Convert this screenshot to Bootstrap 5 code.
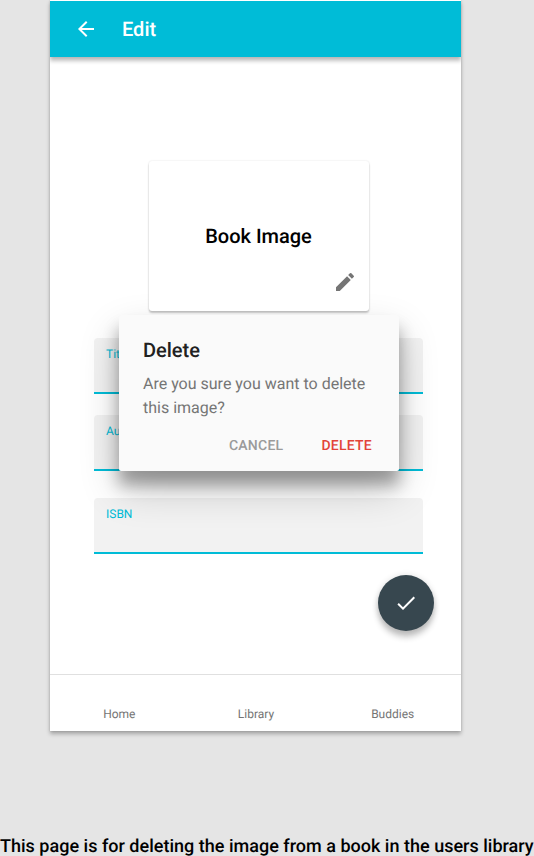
<!DOCTYPE html>
<html lang="en">
<head>
<meta charset="utf-8">
<meta name="viewport" content="width=device-width, initial-scale=1">
<title>Edit</title>
<link href="https://cdn.jsdelivr.net/npm/bootstrap@5.3.0/dist/css/bootstrap.min.css" rel="stylesheet">
<style>
body{background:#e5e5e5;font-family:Roboto,"Liberation Sans",sans-serif;height:856px;overflow:hidden;color:#000;text-rendering:geometricPrecision}
.phone{width:411px;height:731px;margin-left:50px;background:#fff;box-shadow:0 3px 4px rgba(0,0,0,.28),0 0 2px rgba(0,0,0,.14)}
.appbar{height:56px;margin-top:1px;padding:0 24px;background:#00bcd7;color:#fff;box-shadow:0 4px 4px rgba(0,0,0,.24),0 0 4px rgba(0,0,0,.12);gap:24px;clip-path:inset(0 0 -12px 0)}
.appbar h1{font-size:20px;line-height:24px;font-weight:500}
.cover{width:220px;height:150px;margin:104px 0 0 99px;border-radius:3px;box-shadow:0 2px 2px rgba(0,0,0,.22),0 0 2px rgba(0,0,0,.12);z-index:3}
.cover-name{font-size:20px;line-height:24px;font-weight:500;padding:63px 1px 0 0}
.pencil{margin:22px 12px 0 auto}
.fields{margin:27px 38px 0 44px}
.field{height:56px;background:#f2f2f2;border-bottom:2px solid #00bcd7;border-radius:4px 4px 0 0;padding:8px 12px;font-size:12px;line-height:16px;color:#00bcd7}
.field-2{margin-top:21px}
.field-3{margin-top:27px}
.confirm{left:69px;top:315px;width:280px;height:156px;background:#fafafa;border-radius:2px;padding:23px 24px 0;z-index:2;box-shadow:0 14px 16px rgba(0,0,0,.32),0 18px 40px rgba(0,0,0,.2)}
.confirm h2{font-size:20px;line-height:24px;font-weight:500;color:#212121}
.confirm p{font-size:16px;line-height:24px;color:#757575;margin-top:10px}
.actions{gap:38px;margin-top:18px;padding-right:3px}
.choice{font-size:14px;line-height:16px;font-weight:500;letter-spacing:.25px;color:#9b9b9b}
.danger-choice{color:#e24339}
.fab{width:56px;height:56px;margin:21px 27px 0 auto;background:#37474f;box-shadow:0 6px 6px rgba(0,0,0,.24),0 0 6px rgba(0,0,0,.12)}
.tabs{height:57px;border-top:1px solid #e0e0e0;font-size:12px;line-height:14px;color:#757575;padding:0 0 10px 1px}
.caption-line{font-size:18px;line-height:21px;font-weight:500;letter-spacing:.012px;margin-top:105px}
</style>
</head>
<body>
<main class="phone position-relative d-flex flex-column">
  <header class="appbar d-flex align-items-center flex-shrink-0">
    <svg width="24" height="24" viewBox="0 0 24 24" fill="#fff"><path d="M20 11H7.83l5.59-5.59L12 4l-8 8 8 8 1.41-1.41L7.83 13H20v-2z"/></svg>
    <h1 class="m-0">Edit</h1>
  </header>
  <section class="cover position-relative bg-white d-flex flex-column flex-shrink-0">
    <div class="cover-name text-center">Book Image</div>
    <svg class="pencil" width="24" height="24" viewBox="0 0 24 24" fill="#757575"><path d="M3 17.25V21h3.75L17.81 9.94l-3.75-3.75L3 17.25zM20.71 7.04a1 1 0 0 0 0-1.41l-2.34-2.34a1 1 0 0 0-1.41 0l-1.83 1.83 3.75 3.75 1.83-1.83z"/></svg>
  </section>
  <section class="fields">
    <div class="field">Title</div>
    <div class="field field-2">Author</div>
    <div class="field field-3">ISBN</div>
  </section>
  <button class="fab btn border-0 rounded-circle p-0 d-flex align-items-center justify-content-center flex-shrink-0" aria-label="Save">
    <svg width="24" height="24" viewBox="0 0 24 24" fill="#fff"><path d="M9 16.17 4.83 12l-1.42 1.41L9 19 21 7l-1.41-1.41z"/></svg>
  </button>
  <nav class="tabs d-flex align-items-end text-center mt-auto flex-shrink-0">
    <span class="flex-fill w-100">Home</span>
    <span class="flex-fill w-100">Library</span>
    <span class="flex-fill w-100">Buddies</span>
  </nav>
  <div class="confirm position-absolute" role="dialog">
    <h2 class="m-0">Delete</h2>
    <p class="mb-0">Are you sure you want to delete this image?</p>
    <div class="actions d-flex justify-content-end">
      <span class="choice">CANCEL</span>
      <span class="choice danger-choice">DELETE</span>
    </div>
  </div>
</main>
<p class="caption-line mb-0 text-nowrap">This page is for deleting the image from a book in the users library</p>
<script src="https://cdn.jsdelivr.net/npm/bootstrap@5.3.0/dist/js/bootstrap.bundle.min.js"></script>
</body>
</html>
